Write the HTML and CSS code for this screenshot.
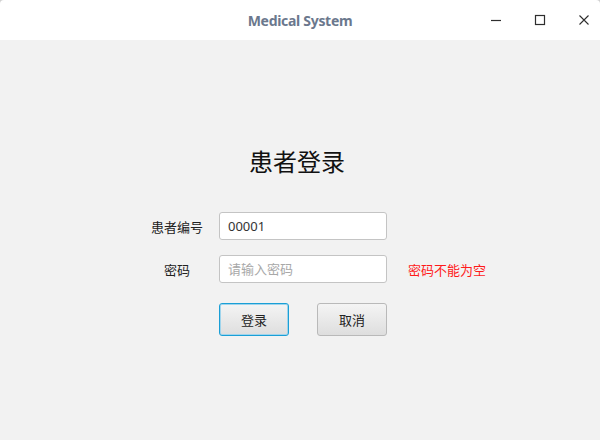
FILE: index.html
```html
<!DOCTYPE html>
<html lang="zh">
<head>
    <meta charset="UTF-8">
    <title>Medical System</title>
    <link rel="stylesheet" href="styles.css">
</head>
<body>

<div class="window">
    <div class="titlebar">
        <span class="title">Medical System</span>
        <div class="controls">
            <span class="ctl">
                <svg width="12" height="12" viewBox="0 0 12 12"><path d="M1 6.5h10" stroke="#2e2e2e" stroke-width="1.2"/></svg>
            </span>
            <span class="ctl">
                <svg width="12" height="12" viewBox="0 0 12 12"><rect x="1.5" y="1.5" width="9" height="9" fill="none" stroke="#2e2e2e" stroke-width="1.2"/></svg>
            </span>
            <span class="ctl">
                <svg width="12" height="12" viewBox="0 0 12 12"><path d="M1.5 1.5l9 9M10.5 1.5l-9 9" stroke="#2e2e2e" stroke-width="1.1"/></svg>
            </span>
        </div>
    </div>

    <div class="content">
        <h1 class="heading">患者登录</h1>

        <div class="form">
            <label class="label">患者编号</label>
            <input class="field" type="text" value="00001">
            <span></span>

            <label class="label">密码</label>
            <input class="field" type="password" placeholder="请输入密码">
            <span class="error">密码不能为空</span>

            <span></span>
            <div class="buttons">
                <button class="btn focused">登录</button>
                <button class="btn">取消</button>
            </div>
            <span></span>
        </div>
    </div>
</div>

</body>
</html>
```

FILE: styles.css
```css
html, body {
    margin: 0;
    padding: 0;
    width: 100%;
    height: 100%;
}
body {
    background-color: #d0d0d0;
    font-family: "Noto Sans", "Noto Sans CJK SC", sans-serif;
}
.window {
    width: 600px;
    height: 440px;
    display: flex;
    flex-direction: column;
    border-radius: 4px 4px 0 0;
    overflow: hidden;
}
.titlebar {
    height: 40px;
    flex: none;
    background-color: #ffffff;
    position: relative;
    display: flex;
    align-items: center;
    justify-content: center;
}
.title {
    font-size: 14px;
    font-weight: bold;
    color: #6b788d;
    letter-spacing: -0.3px;
}
.controls {
    position: absolute;
    right: 10px;
    top: 14px;
    display: flex;
    gap: 32px;
}
.ctl {
    display: block;
    width: 12px;
    height: 12px;
}
.ctl svg {
    display: block;
}
.content {
    flex: 1;
    background-color: #f2f2f2;
    padding-top: 105px;
}
.heading {
    margin: 0 0 0 -6px;
    text-align: center;
    font-size: 24px;
    font-weight: normal;
    line-height: 32px;
    color: #111111;
    font-family: "Noto Sans CJK SC", sans-serif;
}
.form {
    margin-top: 35px;
    padding-left: 142px;
    display: grid;
    grid-template-columns: 70px 168px auto;
    column-gap: 7px;
    row-gap: 15px;
    align-items: center;
}
.form > :nth-child(3n) {
    margin-left: 14px;
}
.label {
    text-align: center;
    font-size: 13px;
    color: #222222;
    font-family: "Noto Sans CJK SC", sans-serif;
}
.field {
    box-sizing: border-box;
    width: 168px;
    height: 28px;
    margin: 0;
    padding: 0 8px;
    border: 1px solid #c4c4c4;
    border-radius: 3px;
    background-color: #ffffff;
    font-size: 13px;
    color: #333333;
    font-family: "Noto Sans", "Noto Sans CJK SC", sans-serif;
    outline: none;
}
.field::placeholder {
    color: #a8a8a8;
    font-family: "Noto Sans CJK SC", sans-serif;
}
.error {
    font-size: 13px;
    color: #ff1a1a;
    font-family: "Noto Sans CJK SC", sans-serif;
}
.buttons {
    margin-top: 5px;
    display: flex;
    justify-content: space-between;
}
.btn {
    box-sizing: border-box;
    width: 70px;
    height: 33px;
    margin: 0;
    padding: 0;
    border: 1px solid #b9b9b9;
    border-radius: 3px;
    background: linear-gradient(#f4f4f4, #dedede);
    font-size: 13px;
    color: #222222;
    font-family: "Noto Sans CJK SC", sans-serif;
}
.btn.focused {
    border-color: #1a9fd6;
    box-shadow: inset 0 0 0 1px #9fd4ec;
}
```
